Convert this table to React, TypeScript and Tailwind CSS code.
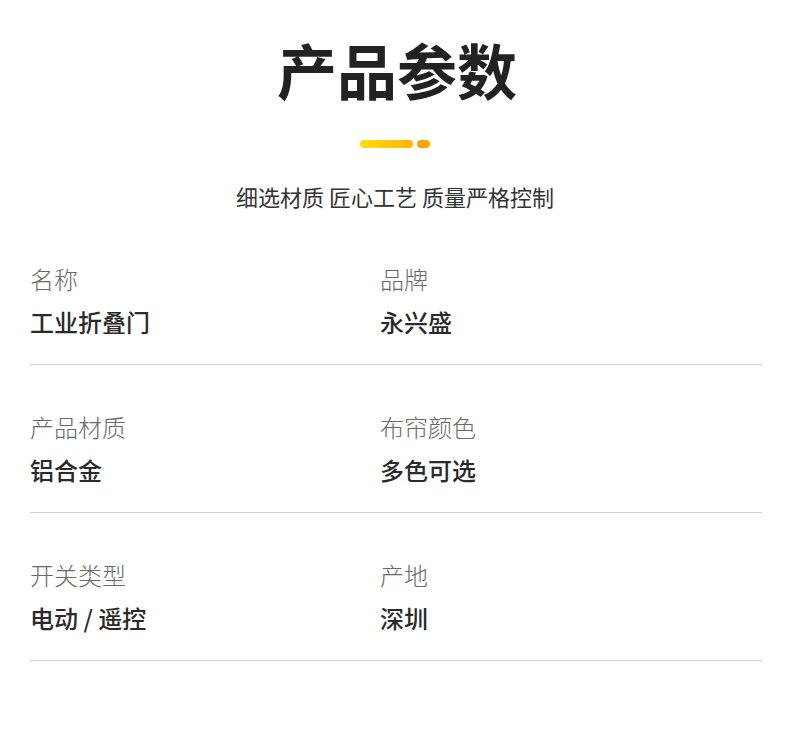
import React from "react";

const rows: [string, string, string, string][] = [
  ["名称", "工业折叠门", "品牌", "永兴盛"],
  ["产品材质", "铝合金", "布帘颜色", "多色可选"],
  ["开关类型", "电动 / 遥控", "产地", "深圳"],
];

function Cell({ label, value }: { label: string; value: string }) {
  return (
    <div className="flex flex-col">
      <span className="text-[24px] leading-[24px] font-light text-[#6a6a6a]">{label}</span>
      <span className="mt-[19px] text-[24px] leading-[24px] font-medium text-[#2a2a2a]">{value}</span>
    </div>
  );
}

export default function App() {
  return (
    <div
      className="w-[790px] h-[731px] bg-white"
      style={{ fontFamily: '"Noto Sans CJK SC", "Noto Sans", sans-serif' }}
    >
      <div className="flex flex-col items-center pt-[39px]">
        <h1 className="text-[60px] leading-[60px] font-bold text-[#222] pl-[4px]">产品参数</h1>
        <div className="mt-[41px] flex items-center gap-[4px]">
          <span className="block w-[53px] h-[8px] rounded-full bg-gradient-to-r from-[#ffdd0a] to-[#fbb60a]" />
          <span className="block w-[13px] h-[8px] rounded-full bg-[#f5a70a]" />
        </div>
        <p className="mt-[37px] text-[22px] leading-[22px] text-[#333]">细选材质 匠心工艺 质量严格控制</p>
      </div>

      <div className="mt-[60px] ml-[30px] w-[732px] flex flex-col">
        {rows.map(([l1, v1, l2, v2], i) => (
          <div key={i} className={i > 0 ? "mt-[50px]" : ""}>
            <div className="grid grid-cols-[350px_1fr]">
              <Cell label={l1} value={v1} />
              <Cell label={l2} value={v2} />
            </div>
            <div className="mt-[30px] h-px bg-[#d2d2d2]" />
          </div>
        ))}
      </div>
    </div>
  );
}
